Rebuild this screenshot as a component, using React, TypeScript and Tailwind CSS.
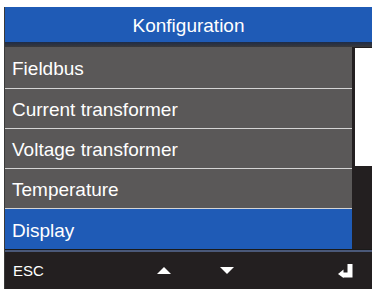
import React from "react";

const items = ["Fieldbus", "Current transformer", "Voltage transformer", "Temperature", "Display"];

export default function App() {
  return (
    <div className="w-[375px] h-[292px] bg-white pt-[7px] pl-[4px]" style={{ fontFamily: '"Liberation Sans", Arial, sans-serif' }}>
      <div className="w-[368px] h-[282px] bg-[#231f20] flex flex-col border-l border-[#3a3a3a]">
        <div className="h-[35px] bg-[#1f5bb6] flex items-center justify-center pt-[2px] text-white text-[19px] leading-none">
          Konfiguration
        </div>
        <div className="h-[5px] bg-gradient-to-b from-[#1e2c48] to-[#3a3939]" />
        <div className="flex h-[202px]">
          <div className="w-[347px] flex flex-col">
            {items.map((t, i) => {
              const sel = t === "Display";
              return (
                <div
                  key={t}
                  className={
                    (i === 0 ? "h-[41px] " : "h-[40px] border-t border-[#d4d4d4] ") +
                    (sel ? "h-[41px] bg-[#1f5bb6] " : "bg-[#5a5858] ") +
                    "flex items-center pl-[7px] pt-[2px] text-white text-[19px] leading-none"
                  }
                >
                  {t}
                </div>
              );
            })}
          </div>
          <div className="w-[3px]" />
          <div className="w-[17px] flex flex-col">
            <div className="h-[1px]" />
            <div className="h-[118px] bg-white" />
          </div>
        </div>
        <div className="h-[1px] bg-[#1a1a1a]" />
        <div className="h-[2px] bg-[#4a5878]" />
        <div className="flex-1 flex items-center relative text-white">
          <span className="absolute left-[8px] text-[15px] leading-none">ESC</span>
          <svg className="absolute left-[152px]" width="14" height="7" viewBox="0 0 14 7">
            <polygon points="7,0 14,7 0,7" fill="#ffffff" />
          </svg>
          <svg className="absolute left-[215px]" width="14" height="7" viewBox="0 0 14 7">
            <polygon points="0,0 14,0 7,7" fill="#ffffff" />
          </svg>
          <svg className="absolute left-[332px]" width="16" height="14" viewBox="0 0 16 14">
            <path d="M10.5 0 H15.5 V13.5 H6 V8.5 H10.5 Z" fill="#ffffff" />
            <polygon points="6.5,5.5 6.5,14 1,10" fill="#ffffff" />
          </svg>
        </div>
      </div>
    </div>
  );
}
